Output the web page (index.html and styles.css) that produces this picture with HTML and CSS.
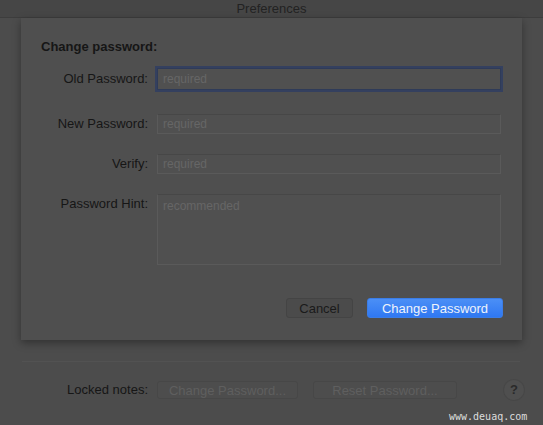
FILE: index.html
```html
<!DOCTYPE html>
<html lang="en">
<head>
  <meta charset="UTF-8">
  <title>Preferences</title>
  <link rel="stylesheet" href="styles.css">
</head>
<body>
  <div class="window">
    <div class="titlebar">Preferences</div>

    <div class="sheet">
      <h2 class="sheet-title">Change password:</h2>

      <div class="form">
        <label class="label">Old Password:</label>
        <div class="field focused">required</div>

        <label class="label">New Password:</label>
        <div class="field">required</div>

        <label class="label">Verify:</label>
        <div class="field">required</div>

        <label class="label">Password Hint:</label>
        <div class="field area">recommended</div>
      </div>

      <div class="actions">
        <button class="btn">Cancel</button>
        <button class="btn primary">Change Password</button>
      </div>
    </div>

    <div class="separator"></div>

    <div class="locked-row">
      <span class="label">Locked notes:</span>
      <button class="btn disabled wide">Change Password...</button>
      <button class="btn disabled wide">Reset Password...</button>
      <span class="help">?</span>
    </div>

    <div class="watermark">www.deuaq.com</div>
  </div>
</body>
</html>
```

FILE: styles.css
```css
body {
  margin: 0;
  background: #4c4c4c;
  font-family: "Liberation Sans", Arial, sans-serif;
  font-size: 13px;
  color: #161616;
}
.window {
  width: 543px;
  height: 425px;
  overflow: hidden;
  position: relative;
}
.titlebar {
  height: 17px;
  line-height: 18px;
  text-align: center;
  background: #464646;
  border-bottom: 1px solid #3d3d3d;
  color: #222222;
}
.sheet {
  width: 461px;
  height: 299px;
  margin-left: 21px;
  padding: 21px 20px 2px 20px;
  background: #4f4f4f;
  box-shadow: 0 3px 8px rgba(0, 0, 0, 0.35);
}
.sheet-title {
  margin: 0;
  font-size: 13px;
  font-weight: bold;
  line-height: 16px;
}
.form {
  display: grid;
  grid-template-columns: 107px 344px;
  column-gap: 9px;
  row-gap: 20px;
  margin-top: 13px;
}
.label {
  text-align: right;
  line-height: 20px;
}
.field {
  height: 18px;
  border: 1px solid #5a5a5a;
  border-top-color: #474747;
  background: #505050;
  color: #666666;
  font-size: 12px;
  line-height: 18px;
  padding-left: 5px;
}
.field.focused {
  height: 20px;
  line-height: 20px;
  margin-bottom: 4px;
  border-color: #2f3b58;
  box-shadow: 0 0 0 2px #34405f;
}
.form .label:first-child {
  line-height: 22px;
}
.field.area {
  height: 69px;
  line-height: 22px;
}
.actions {
  display: flex;
  justify-content: flex-end;
  gap: 14px;
  margin-top: 33px;
}
.btn {
  height: 20px;
  padding: 0 12px;
  font-family: inherit;
  font-size: 13px;
  white-space: nowrap;
  color: #1a1a1a;
  background: #4b4b4b;
  border: 1px solid #444444;
  border-radius: 3px;
}
.actions .btn {
  min-width: 67px;
}
.btn.primary {
  width: 136px;
  margin-right: -1px;
  color: #eef3fb;
  background: linear-gradient(#4b8ff6, #2f78f2);
  border-color: #3b7de6;
}
.separator {
  height: 1px;
  margin: 21px 23px 0 22px;
  background: #525252;
}
.locked-row {
  display: flex;
  align-items: center;
  height: 20px;
  margin-top: 18px;
  padding-left: 41px;
}
.locked-row .label {
  width: 107px;
  margin-right: 9px;
}
.btn.disabled {
  padding: 0 6px;
  color: #5f5f5f;
  border-color: #474747;
  background: #4d4d4d;
}
.btn.wide {
  height: 18px;
}
.btn.wide:first-of-type {
  width: 141px;
  margin-right: 15px;
}
.btn.wide + .btn.wide {
  width: 144px;
}
.help {
  width: 20px;
  height: 20px;
  margin-left: 47px;
  border-radius: 50%;
  background: #4f4f4f;
  box-shadow: 0 0 0 1px #474747;
  text-align: center;
  line-height: 20px;
  font-weight: bold;
  color: #2a2a2a;
}
.watermark {
  position: absolute;
  left: 449px;
  top: 411px;
  font-family: "DejaVu Sans Mono", monospace;
  font-size: 10px;
  color: #dddddd;
}
```
